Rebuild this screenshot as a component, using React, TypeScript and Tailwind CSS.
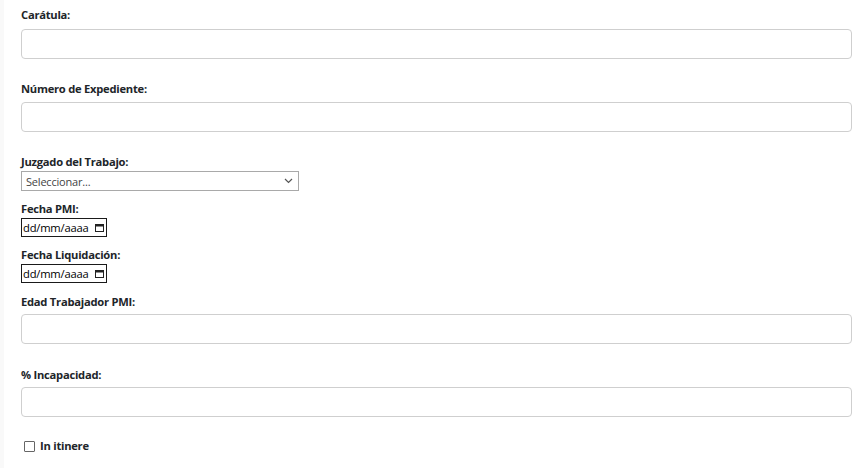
import React from "react";

const font = { fontFamily: '"Open Sans", "Noto Sans", Arial, sans-serif' };

function Label({ children, className = "" }: { children: React.ReactNode; className?: string }) {
  return (
    <div className={`text-[11.2px] leading-[18px] font-bold text-[#212529] tracking-[-0.25px] ${className}`}>
      {children}
    </div>
  );
}

function TextBox({ className = "" }: { className?: string }) {
  return <div className={`h-[30px] w-full rounded-[4px] border border-[#cfcfcf] bg-white ${className}`} />;
}

function DateBox() {
  return (
    <div className="flex h-[19px] w-[86px] items-center justify-between border border-[#1a1a1a] bg-white pl-[1px] pr-[2px]">
      <span className="text-[11.2px] leading-none text-black tracking-[-0.2px]">dd/mm/aaaa</span>
      <svg width="9" height="9" viewBox="0 0 9 9" className="mb-[1px]">
        <rect x="0.5" y="1.5" width="8" height="7" fill="none" stroke="#222" strokeWidth="1" />
        <rect x="0.5" y="1.5" width="8" height="2" fill="#222" />
      </svg>
    </div>
  );
}

export default function App() {
  return (
    <div className="min-h-[468px] w-full bg-white" style={font}>
      <div className="flex min-h-[468px]">
        <div className="w-[4px] shrink-0 bg-[#f9f9f9]" />
        <div className="flex-1 pl-[17px] pr-[16px] pt-[6px]">
          <Label className="mb-[5px]">Carátula:</Label>
          <TextBox />

          <Label className="mt-[21px] mb-[4px]">Número de Expediente:</Label>
          <TextBox />

          <Label className="mt-[21px]">Juzgado del Trabajo:</Label>
          <div className="flex h-[20px] w-[278px] items-center justify-between border border-[#a9a9a9] bg-white pl-[4px] pr-[5px]">
            <span className="text-[11px] leading-none text-[#444] tracking-[-0.2px]">Seleccionar...</span>
            <svg width="9" height="6" viewBox="0 0 9 6">
              <path d="M1 1 L4.5 4.5 L8 1" fill="none" stroke="#555" strokeWidth="1.2" />
            </svg>
          </div>

          <Label className="mt-[9px]">Fecha PMI:</Label>
          <DateBox />

          <Label className="mt-[9px]">Fecha Liquidación:</Label>
          <DateBox />

          <Label className="mt-[10px] mb-[3px]">Edad Trabajador PMI:</Label>
          <TextBox />

          <Label className="mt-[22px] mb-[3px]">% Incapacidad:</Label>
          <TextBox />

          <div className="mt-[20px] flex items-center pl-[3px]">
            <div className="h-[11px] w-[11px] rounded-[1px] border border-[#666] bg-white" />
            <span className="ml-[5px] text-[11.2px] leading-[18px] font-bold text-[#212529] tracking-[-0.25px]">In itinere</span>
          </div>
        </div>
      </div>
    </div>
  );
}
